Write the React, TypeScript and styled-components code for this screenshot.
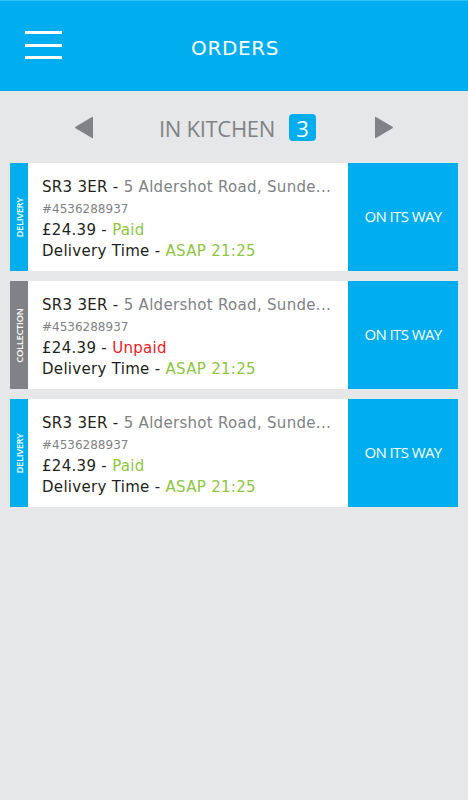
import React from "react";
import styled, { createGlobalStyle } from "styled-components";

const Global = createGlobalStyle`
  html, body { margin: 0; padding: 0; }
  body {
    background: #e6e7e8;
    font-family: "DejaVu Sans", "Open Sans", sans-serif;
    width: 468px;
    height: 800px;
    overflow: hidden;
  }
`;

const Page = styled.div`
  width: 468px;
  height: 800px;
  background: #e6e7e8;
  display: flex;
  flex-direction: column;
`;

const Header = styled.header`
  height: 90px;
  background: #00aeef;
  border-top: 1px solid #33c1f3;
  display: grid;
  grid-template-columns: 100px 1fr 100px;
  align-items: center;
`;

const Burger = styled.div`
  margin-left: 25px;
  width: 37px;
  display: flex;
  flex-direction: column;
  gap: 9.5px;
  transform: translateY(-1px);
  span {
    display: block;
    height: 3px;
    background: #fff;
  }
`;

const Title = styled.h1`
  margin: 0;
  text-align: center;
  color: #fff;
  font-family: "DejaVu Sans", sans-serif;
  font-weight: 400;
  font-size: 20px;
  letter-spacing: 0.6px;
  transform: translate(1px, 2px);
`;

const Nav = styled.div`
  height: 71px;
  display: flex;
  align-items: center;
  justify-content: center;
  padding-top: 1px;
`;

const Arrow = styled.svg<{ $gapL?: number; $gapR?: number }>`
  width: 20px;
  height: 23px;
  flex: none;
  margin-left: ${(p) => p.$gapL ?? 0}px;
  margin-right: ${(p) => p.$gapR ?? 0}px;
`;

const NavLabel = styled.span`
  color: #808285;
  font-family: "Open Sans", sans-serif;
  font-size: 22px;
  font-weight: 400;
  letter-spacing: -0.3px;
`;

const Badge = styled.span`
  margin-left: 14px;
  width: 27px;
  height: 27px;
  border-radius: 4px;
  background: #00aeef;
  color: #fff;
  font-family: "Open Sans", sans-serif;
  font-size: 22px;
  display: flex;
  align-items: center;
  justify-content: center;
  line-height: 1;
`;

const List = styled.div`
  display: flex;
  flex-direction: column;
  gap: 10px;
  padding: 0 10px;
`;

const Card = styled.div`
  height: 108px;
  background: #fff;
  display: flex;
`;

const Strip = styled.div<{ $kind: "delivery" | "collection" }>`
  width: 18px;
  flex: none;
  background: ${(p) => (p.$kind === "delivery" ? "#00aeef" : "#808285")};
  display: flex;
  align-items: center;
  justify-content: center;
  overflow: hidden;
`;

const StripText = styled.span`
  display: block;
  transform: rotate(-90deg);
  white-space: nowrap;
  color: #fff;
  font-family: "Open Sans", sans-serif;
  font-size: 9.5px;
  font-weight: 600;
  letter-spacing: -0.4px;
`;

const Info = styled.div`
  flex: 1;
  min-width: 0;
  padding: 14px 10px 0 14px;
  display: flex;
  flex-direction: column;
`;

const Line = styled.div<{ $small?: boolean; $h?: number }>`
  font-size: ${(p) => (p.$small ? 12 : 15)}px;
  line-height: ${(p) => p.$h ?? 21}px;
  height: ${(p) => p.$h ?? 21}px;
  letter-spacing: ${(p) => (p.$small ? 0 : 0.3)}px;
  color: ${(p) => (p.$small ? "#808285" : "#231f20")};
  white-space: nowrap;
`;

const Muted = styled.span`
  color: #808285;
`;

const Status = styled.span<{ $tone: "green" | "red" }>`
  color: ${(p) => (p.$tone === "green" ? "#8dc63f" : "#ed1c24")};
`;

const Action = styled.button`
  width: 110px;
  flex: none;
  border: none;
  background: #00aeef;
  color: #fff;
  font-family: "Open Sans", sans-serif;
  font-size: 15px;
  font-weight: 500;
  letter-spacing: -0.6px;
  cursor: pointer;
  padding: 0 0 3px 0;
`;

type Order = { kind: "delivery" | "collection"; paid: boolean };

const orders: Order[] = [
  { kind: "delivery", paid: true },
  { kind: "collection", paid: false },
  { kind: "delivery", paid: true },
];

export default function App() {
  return (
    <Page>
      <Global />
      <Header>
        <Burger>
          <span />
          <span />
          <span />
        </Burger>
        <Title>ORDERS</Title>
        <div />
      </Header>
      <Nav>
        <Arrow viewBox="0 0 20 23" $gapR={65}>
          <path d="M19 1.5 L19 21.5 Q19 22.5 18 22 L1.5 12.2 Q0.5 11.5 1.5 10.8 L18 1 Q19 0.5 19 1.5 Z" fill="#808285" />
        </Arrow>
        <NavLabel>IN KITCHEN</NavLabel>
        <Badge>3</Badge>
        <Arrow viewBox="0 0 20 23" $gapL={58}>
          <path d="M1 1.5 L1 21.5 Q1 22.5 2 22 L18.5 12.2 Q19.5 11.5 18.5 10.8 L2 1 Q1 0.5 1 1.5 Z" fill="#808285" />
        </Arrow>
      </Nav>
      <List>
        {orders.map((o, i) => (
          <Card key={i}>
            <Strip $kind={o.kind}>
              <StripText>{o.kind === "delivery" ? "DELIVERY" : "COLLECTION"}</StripText>
            </Strip>
            <Info>
              <Line>
                SR3 3ER - <Muted>5 Aldershot Road, Sunde...</Muted>
              </Line>
              <Line $small $h={22}>#4536288937</Line>
              <Line>
                £24.39 - <Status $tone={o.paid ? "green" : "red"}>{o.paid ? "Paid" : "Unpaid"}</Status>
              </Line>
              <Line $h={20}>
                Delivery Time - <Status $tone="green">ASAP 21:25</Status>
              </Line>
            </Info>
            <Action>ON ITS WAY</Action>
          </Card>
        ))}
      </List>
    </Page>
  );
}
